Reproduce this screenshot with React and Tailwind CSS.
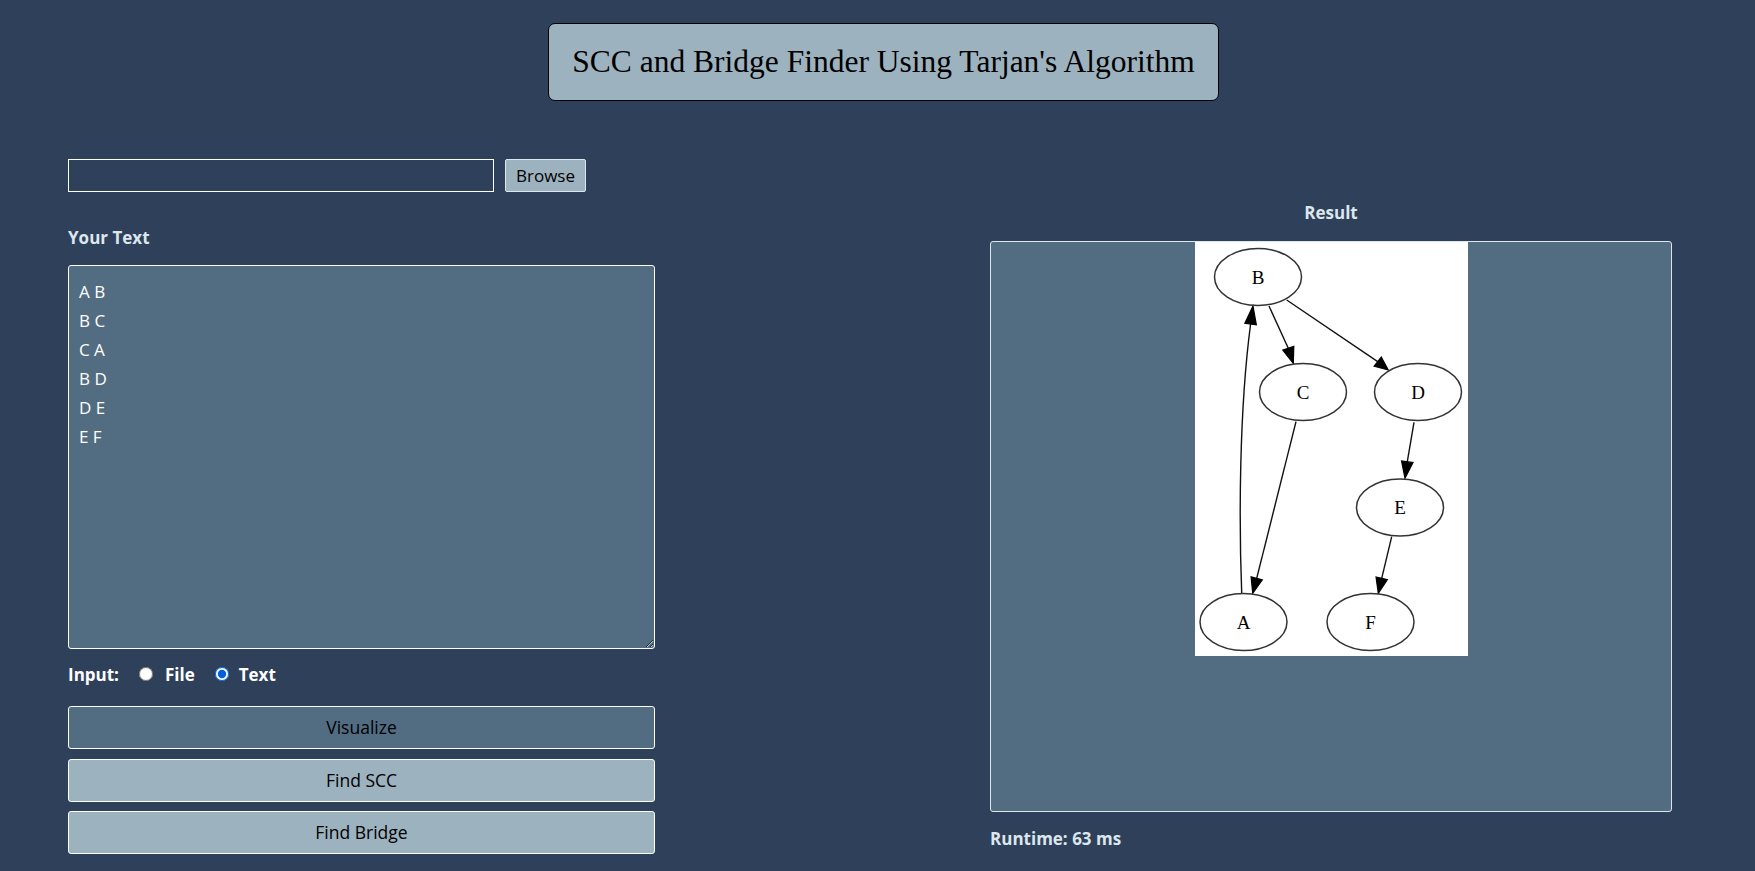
import React, { useState } from "react";

const nodes = [
  { id: "B", cx: 63, cy: 35 },
  { id: "C", cx: 108, cy: 150 },
  { id: "D", cx: 223, cy: 150 },
  { id: "E", cx: 205, cy: 265.5 },
  { id: "A", cx: 48.5, cy: 380 },
  { id: "F", cx: 175.5, cy: 380 },
];

const edges = [
  { d: "M46.7 351 C 44 280, 44 170, 55.6 82", base: [55.6, 82], tip: [58, 64] },
  { d: "M74 64 L93.3 106.3", base: [93.3, 106.3], tip: [98.3, 121.3] },
  { d: "M91.7 58 L182.7 119.7", base: [182.7, 119.7], tip: [193.3, 128] },
  { d: "M101 179.7 L61.7 336.3", base: [61.7, 336.3], tip: [57.7, 351.3] },
  { d: "M219 180.3 L212.3 219.7", base: [212.3, 219.7], tip: [210, 236.3] },
  { d: "M196.7 294.7 L186.7 336.3", base: [186.7, 336.3], tip: [183.3, 351.3] },
];

// arrowhead as filled triangle from base to tip
const arrowHead = (base, tip) => {
  const dx = tip[0] - base[0];
  const dy = tip[1] - base[1];
  const len = Math.sqrt(dx * dx + dy * dy);
  const nx = (-dy / len) * 5.8;
  const ny = (dx / len) * 5.8;
  return `${tip[0]},${tip[1]} ${base[0] + nx},${base[1] + ny} ${base[0] - nx},${base[1] - ny}`;
};

const Graph = () => (
  <svg width="273" height="414" viewBox="0 0 273 414" className="bg-white block">
    {edges.map((e, i) => (
      <g key={i}>
        <path d={e.d} fill="none" stroke="#111" strokeWidth="1.4" />
        <polygon points={arrowHead(e.base, e.tip)} fill="#000" stroke="#000" strokeWidth="1.2" />
      </g>
    ))}
    {nodes.map((n) => (
      <g key={n.id}>
        <ellipse cx={n.cx} cy={n.cy} rx="43.5" ry="28.5" fill="none" stroke="#333" strokeWidth="1.5" />
        <text
          x={n.cx}
          y={n.cy + 6.5}
          textAnchor="middle"
          fontSize="19"
          fontFamily="'Liberation Serif', serif"
          fill="#000"
        >
          {n.id}
        </text>
      </g>
    ))}
  </svg>
);

const App = () => {
  const [mode, setMode] = useState("text");
  const [text, setText] = useState("A B\nB C\nC A\nB D\nD E\nE F");

  return (
    <div className="min-h-screen bg-[#2e405a] font-['Open_Sans',sans-serif] overflow-hidden">
      {/* Header */}
      <div className="flex justify-center pt-[23px] pl-[12px]">
        <div className="w-[671px] h-[78px] bg-[#9db2bf] border border-black rounded-[7px] flex items-center justify-center">
          <h1 className="font-['Liberation_Serif',serif] text-[31.5px] text-black">
            SCC and Bridge Finder Using Tarjan's Algorithm
          </h1>
        </div>
      </div>

      <div className="flex pl-[68px] pt-[58px]">
        {/* Left column */}
        <div className="w-[587px] flex flex-col">
          <div className="flex items-center gap-[11px]">
            <input
              type="text"
              className="w-[426px] h-[33px] bg-transparent border border-white outline-none text-white px-2"
            />
            <button className="h-[33px] px-[10px] bg-[#9db2bf] border border-[#dde6ed] rounded-[2px] text-[17px] text-black">
              Browse
            </button>
          </div>

          <div className="mt-[33px] text-[17px] font-bold text-[#dde6ed]">Your Text</div>

          <textarea
            value={text}
            onChange={(e) => setText(e.target.value)}
            className="mt-[14px] w-[587px] h-[384px] bg-[#526d82] border border-white rounded-[3px] px-[10px] pt-[11px] pb-[10px] text-[17px] leading-[29px] text-white outline-none"
          />

          <div className="flex items-center mt-[13px] text-[17px] font-bold text-white">
            <span>Input:</span>
            <label className="flex items-center ml-[20px]">
              <input
                type="radio"
                name="mode"
                checked={mode === "file"}
                onChange={() => setMode("file")}
                className="w-[14px] h-[14px] m-0"
              />
              <span className="ml-[12px]">File</span>
            </label>
            <label className="flex items-center ml-[20px]">
              <input
                type="radio"
                name="mode"
                checked={mode === "text"}
                onChange={() => setMode("text")}
                className="w-[14px] h-[14px] m-0 accent-[#0060df]"
              />
              <span className="ml-[10px]">Text</span>
            </label>
          </div>

          <div className="flex flex-col gap-[9.5px] mt-[19px]">
            <button className="h-[43px] bg-[#526d82] border border-white rounded-[3px] text-[17.5px] text-black">
              Visualize
            </button>
            <button className="h-[43px] bg-[#9db2bf] border border-white rounded-[3px] text-[17.5px] text-black">
              Find SCC
            </button>
            <button className="h-[43px] bg-[#9db2bf] border border-white rounded-[3px] text-[17.5px] text-black">
              Find Bridge
            </button>
          </div>
        </div>

        {/* Right column */}
        <div className="w-[682px] ml-[335px] flex flex-col">
          <div className="mt-[41px] text-center text-[17px] font-bold text-[#dde6ed]">Result</div>
          <div className="mt-[15px] h-[571px] bg-[#526d82] border border-[#dde6ed] rounded-[3px] flex justify-center items-start">
            <Graph />
          </div>
          <div className="mt-[14px] text-[17px] font-bold text-[#dde6ed]">Runtime: 63 ms</div>
        </div>
      </div>
    </div>
  );
};

export default App;
